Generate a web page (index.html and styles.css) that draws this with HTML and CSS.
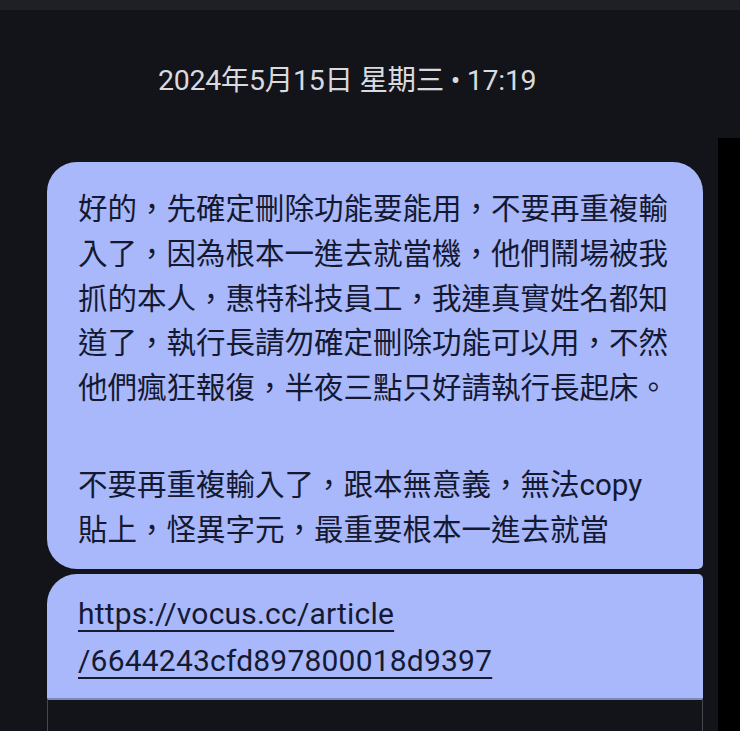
FILE: index.html
```html
<!DOCTYPE html>
<html lang="zh-Hant">
<head>
<meta charset="utf-8">
<title>Messages</title>
<link rel="stylesheet" href="styles.css">
</head>
<body>
<div class="topbar"></div>
<div class="screen">
  <main class="thread">
    <div class="date">2024年5月15日 星期三 • 17:19</div>
    <div class="bubble b1">
      <p class="para">好的，先確定刪除功能要能用，不要再重複輸<br>入了，因為根本一進去就當機，他們鬧場被我<br>抓的本人，惠特科技員工，我連真實姓名都知<br>道了，執行長請勿確定刪除功能可以用，不然<br>他們瘋狂報復，半夜三點只好請執行長起床。</p>
      <p class="para second">不要再重複輸入了，跟本無意義，無法copy<br>貼上，怪異字元，最重要根本一進去就當</p>
    </div>
    <div class="bubble b2">
      <div class="linkbox">
        <a class="link">https://vocus.cc/article<br>/6644243cfd897800018d9397</a>
      </div>
      <div class="preview"></div>
    </div>
  </main>
  <aside class="edge"></aside>
</div>
</body>
</html>
```

FILE: styles.css
```css
html, body {
  margin: 0;
  padding: 0;
  background: #131419;
  height: 731px;
  overflow: hidden;
}
body {
  font-family: Roboto, "Noto Sans CJK TC", sans-serif;
}
.topbar {
  height: 10px;
  background: #1f2025;
}
.screen {
  display: grid;
  grid-template-columns: 718px 1fr;
  height: 721px;
  overflow: hidden;
}
.thread {
  display: flex;
  flex-direction: column;
}
.edge {
  margin-top: 128px;
  background: #000;
}
.date {
  margin-top: 54px;
  padding-left: 158px;
  font-size: 28.5px;
  line-height: 34px;
  color: #d9dadf;
  letter-spacing: -0.3px;
}
.bubble {
  margin-left: 47px;
  width: 656px;
  background: #a9b8fa;
  color: #141931;
  box-sizing: border-box;
}
.b1 {
  margin-top: 64px;
  border-radius: 30px 30px 5px 30px;
  padding: 22px 20px 16px 31px;
}
.para {
  margin: 0;
  font-family: "Noto Sans CJK TC", sans-serif;
  font-size: 29.5px;
  line-height: 44.8px;
  white-space: nowrap;
}
.para.second {
  margin-top: 55px;
  font-family: Roboto, "Noto Sans CJK TC", sans-serif;
}
.b2 {
  margin-top: 5px;
  border-radius: 30px 5px 0 0;
  overflow: hidden;
  height: 158px;
}
.linkbox {
  padding: 16px 20px 14px 31px;
}
.link {
  font-family: Roboto, sans-serif;
  font-size: 30px;
  line-height: 47px;
  color: #141a33;
  text-decoration: underline;
  text-decoration-thickness: 2px;
  text-underline-offset: 6px;
  text-decoration-skip-ink: none;
  letter-spacing: 0.2px;
}
.preview {
  height: 40px;
  background: #131419;
  border: 1px solid #46484f;
  border-top: 2px solid #7d89b9;
  border-bottom: 0;
}
```
